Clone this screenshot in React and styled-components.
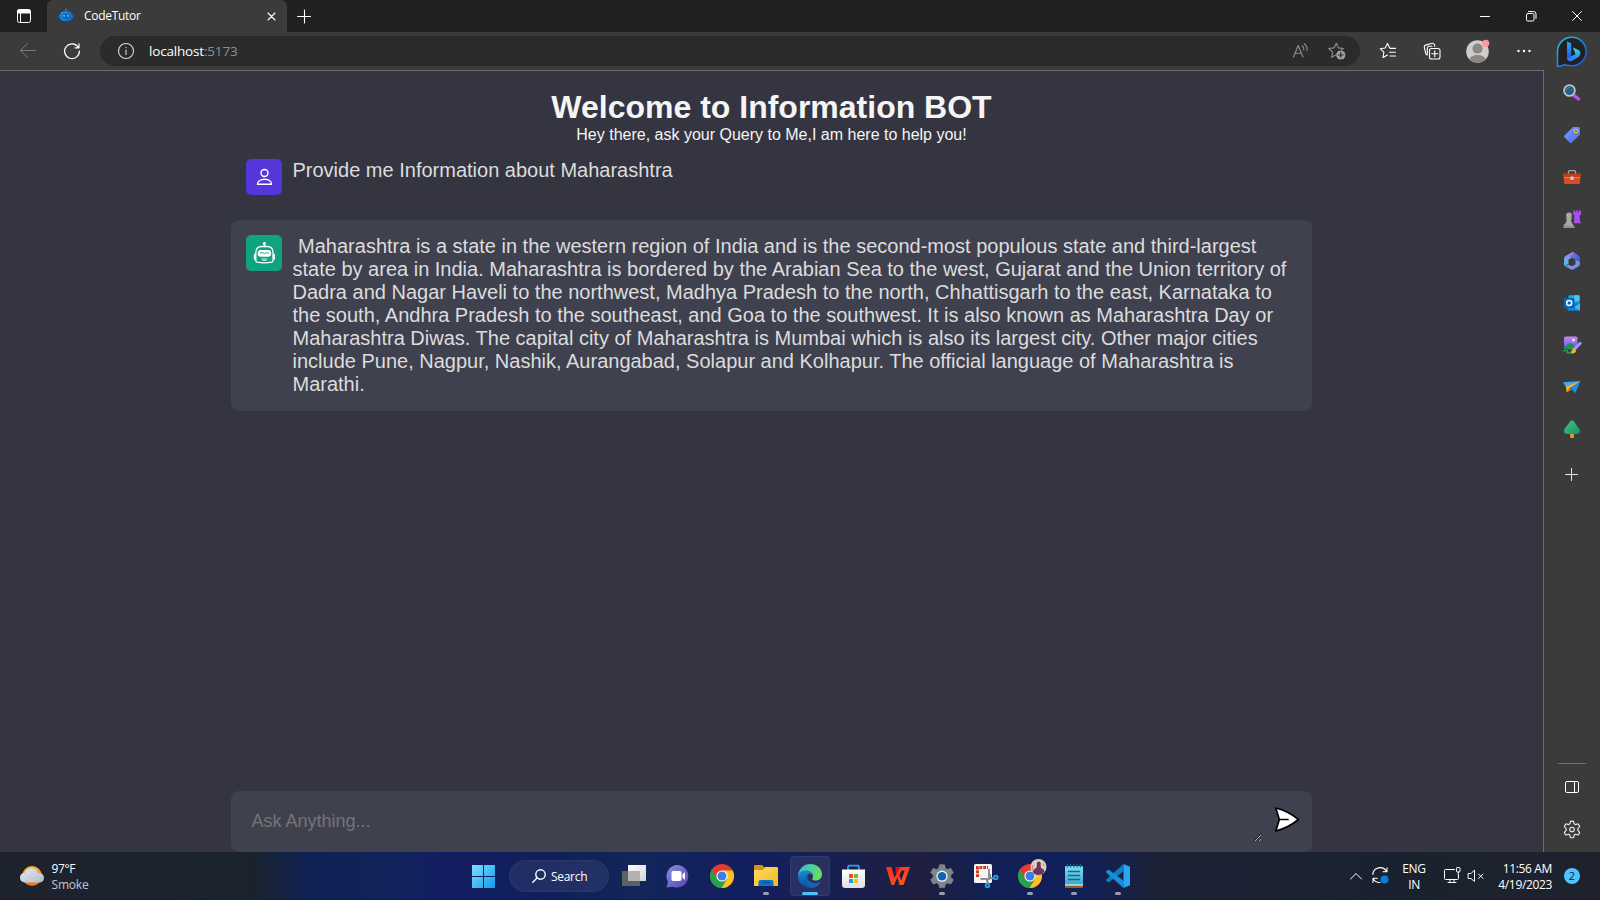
import React from "react";
import styled, { createGlobalStyle, css } from "styled-components";

const GlobalStyle = createGlobalStyle`
  * { box-sizing: border-box; margin: 0; padding: 0; }
  body { margin: 0; width: 1600px; height: 900px; overflow: hidden; background: #202020; }
  button { border: 0; background: none; color: inherit; font: inherit; }
  svg { display: block; flex: none; overflow: visible; }
`;

const uiFont = `"Open Sans", "Noto Sans", sans-serif`;

const Desktop = styled.div`
  display: flex;
  flex-direction: column;
  width: 1600px;
  height: 900px;
  font-family: ${uiFont};
  color: #fff;
`;

/* ---------- tab strip ---------- */
const TabStrip = styled.div`
  display: flex;
  height: 32px;
  background: #202020;
`;
const TabActions = styled.button`
  display: grid;
  place-items: center;
  width: 47px;
  height: 32px;
  border-radius: 0 0 4px 0;
`;
const Tab = styled.div`
  display: flex;
  align-items: center;
  width: 240px;
  padding: 0 10px 0 11px;
  background: #3b3b3b;
  border-radius: 6px 6px 0 0;
`;
const TabTitle = styled.span`
  flex: 1;
  margin-left: 10px;
  font-size: 12px;
  line-height: 16px;
  letter-spacing: -0.3px;
`;
const NewTab = styled.button`
  display: grid;
  place-items: center;
  width: 34px;
`;
const WindowControls = styled.div`
  display: flex;
  margin-left: auto;
`;
const WindowButton = styled.button`
  display: grid;
  place-items: center;
  width: 46px;
  height: 32px;
`;

/* ---------- browser ---------- */
const BrowserBody = styled.div`
  display: flex;
  height: 820px;
`;
const MainColumn = styled.div`
  display: flex;
  flex-direction: column;
  width: 1544px;
`;
const Toolbar = styled.div`
  display: flex;
  align-items: center;
  height: 38px;
  padding-left: 6px;
  background: #3b3b3b;
`;
const ToolButton = styled.button`
  display: grid;
  flex: none;
  place-items: center;
  width: ${(p) => p.$w || 44}px;
  height: 30px;
`;
const AddressBar = styled.div`
  display: flex;
  flex: none;
  align-items: center;
  width: 1260px;
  height: 30px;
  margin: 0 6px;
  padding: 0 5px 0 17px;
  border-radius: 15px;
  background: #2b2b2b;
`;
const Url = styled.span`
  flex: 1;
  margin-left: 14px;
  font-size: 13.5px;
  line-height: 20px;
  letter-spacing: -0.18px;
  color: #fff;
`;
const Port = styled.span`
  color: #8f8f8f;
`;
const Sidebar = styled.aside`
  display: flex;
  flex-direction: column;
  align-items: center;
  width: 56px;
  background: #3b3b3b;
`;
const SideButton = styled.button`
  display: grid;
  place-items: center;
  width: 42px;
  height: ${(p) => p.$h || 42}px;
`;
const SideDivider = styled.div`
  width: 28px;
  height: 1px;
  margin-top: auto;
  margin-bottom: 2px;
  background: #6e6e6e;
`;
const SideFooter = styled.div`
  padding-bottom: 2px;
`;

/* ---------- page ---------- */
const Page = styled.main`
  display: flex;
  flex-direction: column;
  align-items: center;
  flex: 1;
  border-top: 1px solid #6d6d6d;
  border-right: 1px solid #6d6d6d;
  background: #343541;
  font-family: "Liberation Sans", Arial, sans-serif;
`;
const Header = styled.header`
  padding-top: 18px;
  text-align: center;
  color: #f5f5f5;
`;
const Title = styled.h1`
  font-size: 32px;
  line-height: 37px;
  font-weight: 700;
`;
const Subtitle = styled.p`
  font-size: 16px;
  line-height: 18px;
`;
const Chat = styled.section`
  display: flex;
  flex-direction: column;
  flex: 1;
  gap: 10px;
  width: 1081px;
`;
const Message = styled.div`
  display: flex;
  gap: 10.5px;
  padding: 15px;
  border-radius: 8px;
  ${(p) => p.$bot && css`background: #40414f;`}
`;
const Avatar = styled.div`
  flex: none;
  width: 36px;
  height: 36px;
  border-radius: 5px;
  background: ${(p) => (p.$bot ? "#10a37f" : "#5436da")};
`;
const MessageText = styled.p`
  width: 1000px;
  font-size: 20px;
  line-height: 23px;
  color: #dcdcdc;
  white-space: pre-wrap;
`;
const PromptForm = styled.form`
  display: flex;
  width: 1081px;
  height: 61px;
  padding: 10px;
  border-radius: 8px;
  background: #40414f;
`;
const PromptInput = styled.textarea`
  flex: 1;
  height: 41px;
  padding: 10px 10px 10px 10.5px;
  border: 0;
  outline: 0;
  background: transparent;
  color: #fff;
  font-family: inherit;
  font-size: 18px;
  line-height: 21px;
  &::placeholder { color: #757575; }
`;
const SendButton = styled.button`
  display: flex;
  width: 40px;
  height: 41px;
  padding: 5px 0 0 12px;
`;

/* ---------- taskbar ---------- */
const Taskbar = styled.footer`
  display: flex;
  align-items: center;
  height: 48px;
  border-bottom: 1px solid #191a2b;
  background: linear-gradient(90deg,
    #1e232d 0, #1a222e 255px, #15233f 278px, #102254 308px, #12225c 400px, #131e62 450px,
    #101f59 540px, #13255a 640px, #121f5e 740px, #181f52 830px, #1f1f3f 920px,
    #111f55 990px, #10205a 1070px, #182047 1125px, #1c2234 1160px, #1a212e 1400px, #1e222d 1600px);
`;
const Weather = styled.div`
  display: flex;
  align-items: center;
  gap: 7.5px;
  width: 462px;
  padding-left: 20px;
`;
const Stack = styled.div`
  display: flex;
  flex-direction: column;
  width: ${(p) => p.$w}px;
  padding-top: 2px;
  text-align: ${(p) => p.$align || "left"};
  font-size: 12px;
  line-height: 16px;
  letter-spacing: -0.35px;
  white-space: nowrap;
`;
const Muted = styled.span`
  color: #c3c6cb;
  letter-spacing: -0.2px;
`;
const AppSlot = styled.button`
  display: flex;
  flex-direction: column;
  align-items: center;
  width: 40px;
  height: 40px;
  margin: 0 2px;
  padding-top: 8px;
  border-radius: 4px;
  ${(p) => p.$active && css`
    background: rgba(255, 255, 255, 0.08);
    box-shadow: inset 0 0 0 1px rgba(255, 255, 255, 0.05);
  `}
`;
const Running = styled.i`
  width: ${(p) => (p.$active ? 16 : 6)}px;
  height: 3px;
  margin-top: 4px;
  border-radius: 2px;
  background: ${(p) => (p.$active ? "#4cc2ff" : "#9a9eb4")};
`;
const SearchPill = styled.button`
  display: flex;
  align-items: center;
  gap: 5px;
  width: 100px;
  height: 32px;
  margin: 0 3px;
  padding: 1px 0 0 23px;
  border-radius: 16px;
  background: rgba(255, 255, 255, 0.07);
  box-shadow: inset 0 0 0 1px rgba(255, 255, 255, 0.03);
  font-size: 12px;
  font-weight: 500;
  letter-spacing: -0.3px;
`;
const Tray = styled.div`
  display: flex;
  align-items: center;
  margin-left: auto;
  padding-right: 20px;
`;
const TrayIcon = styled.div`
  margin-left: ${(p) => p.$gap}px;
`;
const Badge = styled.div`
  display: grid;
  place-items: center;
  width: 16px;
  height: 16px;
  margin-left: 12px;
  border-radius: 50%;
  background: #4cc2ff;
  color: #14202c;
  font-size: 11px;
  line-height: 16px;
`;

/* ---------- icons ---------- */
const Line = ({ w = 16, h = w, color = "#fff", sw = 1, children }) => (
  <svg width={w} height={h} viewBox={`0 0 ${w} ${h}`} fill="none" stroke={color} strokeWidth={sw} strokeLinecap="round" strokeLinejoin="round">{children}</svg>
);
const Art = ({ w = 24, h = w, children }) => (
  <svg width={w} height={h} viewBox={`0 0 ${w} ${h}`}>{children}</svg>
);
const Grad = ({ id, a, b, x2 = 1, y2 = 1 }) => (
  <linearGradient id={id} x1="0" y1="0" x2={x2} y2={y2}>
    <stop offset="0" stopColor={a} />
    <stop offset="1" stopColor={b} />
  </linearGradient>
);

const Favicon = () => (
  <Art w={16}>
    <Grad id="fav" a="#1b9de8" b="#0866d0" y2={1} />
    <path d="M7.500 1h1v3h-1z" fill="#2c7db0" /><circle cx="8" cy="1.500" r="1" fill="#2c7db0" />
    <rect x="0.300" y="6.500" width="15.400" height="4" rx="1.600" fill="#1266bd" />
    <rect x="2.200" y="3.400" width="11.600" height="9.600" rx="3.800" fill="url(#fav)" />
    <rect x="4" y="5.400" width="8" height="4.800" rx="2.200" fill="#0756ad" />
    <circle cx="6" cy="7.800" r="1.200" fill="#35bdf5" /><circle cx="10" cy="7.800" r="1.200" fill="#35bdf5" />
  </Art>
);

const ReadAloud = () => (
  <Line w={18} color="#8f8f8f" sw={1.1}>
    <path d="M1.500 15 6.200 3.500 11 15M3.200 11.200h6M10.300 4c1.200 1 1.700 2.400 1.500 4M12.200 1.700c2.200 1.700 3.200 4 2.800 7" />
  </Line>
);
const StarPlus = () => (
  <Line w={18} color="#8f8f8f" sw={1.1}>
    <path d="M13.500 7.500 15.500 6.500 10.500 5.900 8.300 1.200 6 5.900.8 6.500l3.800 3.600-1 5.200 4-2.200" />
    <circle cx="12.800" cy="13" r="4.600" fill="#a0a0a0" stroke="none" />
    <path d="M10.500 13h4.600M12.800 10.700v4.600" stroke="#2b2b2b" strokeWidth="1.200" />
  </Line>
);
const Favorites = () => (
  <Line w={18} sw={1.1}>
    <path d="M10.500 5.500 8.500 1.500 6.200 6l-5 .7L4.900 10.200 4 15.500l4.500-2.500M11 6.400h5.500M10.500 10.200h6M11 14h5.500" />
  </Line>
);
const Collections = () => (
  <Line w={18} sw={1.1}>
    <rect x="6.500" y="6.500" width="10.500" height="10.500" rx="2" />
    <path d="M11.750 8.800v6M8.750 11.750h6M4.200 13c-1-.4-1.300-.9-1.500-1.700L1.300 5.300c-.2-1 .3-1.900 1.300-2.200l6.600-1.800c1-.2 1.900.3 2.200 1.300l.5 1.700M5.600 4.300q-1.300.5-1.300 2V12M5.600 4.300H9" />
  </Line>
);
const Profile = () => (
  <Art w={24}>
    <clipPath id="pf"><circle cx="11.500" cy="12.500" r="11.300" /></clipPath>
    <g clipPath="url(#pf)">
      <rect width="24" height="24" fill="#cfcdcb" />
      <circle cx="11.500" cy="9.600" r="5" fill="#8a8785" />
      <ellipse cx="11.500" cy="21" rx="8.200" ry="5" fill="#8a8785" />
    </g>
    <circle cx="19.700" cy="4.300" r="3.600" fill="#f99b98" />
  </Art>
);
const Bing = () => (
  <Art w={32}>
    <Grad id="bb" a="#20c4e4" b="#1f4de0" />
    <Grad id="b1" a="#2aa9f5" b="#1b55e8" x2={0} />
    <Grad id="b2" a="#3bdbe8" b="#2f6bf0" x2={0} />
    <path d="M1.500 30.500V15.500A14.300 14.300 0 1 1 15.800 29.800c-3 0-5-.4-7-1.200C6 29.700 4 30.500 1.500 30.500z" fill="#202124" stroke="url(#bb)" strokeWidth="1.500" />
    <path d="M11 5.500l4.200 1.800v13.500L11 23.500z" fill="url(#b1)" />
    <path d="M17 11.500l6 2.800c2.300 2.400 1.500 5.300-.5 6.600l-6.500 4c-2.500 1-5 .1-5-2.300l8.500-4.400z" fill="url(#b2)" />
  </Art>
);

const sideIcons = {
  search: (
    <Art w={18}>
      <path d="M11 11.500l4.600 3.600" stroke="#c050ee" strokeWidth="3.200" strokeLinecap="round" />
      <circle cx="6.500" cy="6.500" r="5.400" fill="#25607f" stroke="#c0c2c4" strokeWidth="1.800" />
      <path d="M3.500 6.500a3.300 3.300 0 0 1 4-3" stroke="#3e8dad" fill="none" />
    </Art>
  ),
  tag: (
    <Art w={18}>
      <Grad id="tg" a="#79a0ff" b="#4a69e8" />
      <path d="M10 1h5.500q1.500 0 1.500 1.500v6L9 16.500q-1.200 1-2.400 0L1.600 11.600q-1-1.200 0-2.400z" fill="url(#tg)" />
      <circle cx="13" cy="5" r="1.600" fill="#3d4b8e" stroke="#f4c72c" strokeWidth="1.300" />
    </Art>
  ),
  tools: (
    <Art w={18}>
      <path d="M5.500 6V3.600q0-1 1-1h5q1 0 1 1V6" fill="none" stroke="#a3a5a5" strokeWidth="1.300" />
      <rect x="1" y="9" width="16" height="7" rx="1" fill="#dd4b23" />
      <rect x="0.200" y="5.400" width="17.600" height="5" rx="1" fill="#c43c1c" />
      <path d="M.8 9h16.400v1.200H.8z" fill="#f4764c" />
      <circle cx="9" cy="10.200" r="1.900" fill="#cbcaca" />
    </Art>
  ),
  games: (
    <Art w={18}>
      <path d="M10.200.5h2v1.700h1V.5h2v1.700h1V.5H18v4l-1.400 1 .4 5.500 1 2.300h-7l.4-8-1.200-1z" fill="#a950ea" />
      <circle cx="6" cy="5.500" r="2.900" fill="#aaa" />
      <path d="M2.500 8h7L8 9.700q.2 3.200 2.300 5V18H.8v-3.300q2.600-1.500 3-5z" fill="#a7a7a7" />
      <path d="M.5 15.700h11V18H.5z" fill="#919191" />
    </Art>
  ),
  m365: (
    <Art w={18}>
      <Grad id="m1" a="#a583ee" b="#48c3f0" x2={0} />
      <Grad id="m2" a="#8e7bea" b="#2c50cf" />
      <path d="M9 .3 2.600 4Q1 5 1 7v5q0 1.500 1 2.200l3.500-2.500V7.500L11.500 4V.8Q10-.3 9 .3z" fill="url(#m1)" />
      <path d="M11 .7l4.500 2.700Q17 4.500 17 6.500V12l-4.500-2.200V7.700L7.500 5 6 4.500z" fill="url(#m2)" />
      <path d="M17 10v1.500q0 2-1.600 3l-4.800 2.800q-1.600.8-3.200 0l-5.600-3.300q2 .3 3.700-1.500L9 14.300l3.500-2V8z" fill="#7593ee" />
    </Art>
  ),
  outlook: (
    <Art w={18}>
      <rect x="5.500" y="1.300" width="11" height="12" rx="1" fill="#1fa3e8" />
      <path d="M11 1.300h4.500q1 0 1 1V7H11z" fill="#4cc4f5" />
      <path d="M4.500 10 17 8.500V15.500q0 1.200-1.200 1.200H5.700q-1.200 0-1.200-1.200z" fill="#1183d1" />
      <path d="M17 9 11 13.500l5.500 3q.5-.5.500-1z" fill="#42b8f0" />
      <rect x="1" y="4" width="10.500" height="10" rx="1" fill="#0865bd" />
      <circle cx="6.200" cy="9" r="2.500" fill="none" stroke="#fff" strokeWidth="1.500" />
    </Art>
  ),
  image: (
    <Art w={18}>
      <Grad id="im" a="#bc8bf5" b="#7350d4" x2={0} />
      <rect x="1" y=".5" width="13.500" height="13" rx="1.700" fill="url(#im)" />
      <path d="M1 11 6 7.500q1.500-1 3 0L12 10l-3 3.500H1z" fill="#208e56" />
      <circle cx="10.500" cy="4" r="1.500" fill="#f1ddff" />
      <path d="M0 13.500h9V18H0z" fill="#3b3b3b" />
      <path d="M.5 15.500q2-2 4-.5-1 2 1 2t2.500-1.500" stroke="#26a269" strokeWidth="1.400" fill="none" />
      <path d="M17.300 7.300 12 12.500" stroke="#a497f5" strokeWidth="2.800" strokeLinecap="round" />
      <path d="M10 12q2.800.3 3.200 3Q11.500 18.500 7.700 17.300q1-2.800 2.300-5.300z" fill="#f7ae28" />
    </Art>
  ),
  drop: (
    <Art w={18}>
      <path d="M0 4.300 17.500 3 8 9.500 3.500 10z" fill="#42a8ef" />
      <path d="M17.500 3 12.200 15.500 7.500 9.800z" fill="#248be4" />
      <path d="M17 3.500 3 8.400 3.500 14.500l2.900-4.200z" fill="#f9b529" />
      <path d="M3.500 14.500 6.400 10l2 1.700z" fill="#dc8b0b" />
    </Art>
  ),
  tree: (
    <Art w={18}>
      <Grad id="tr" a="#3fc584" b="#159263" />
      <rect x="7.200" y="13" width="3.700" height="5" rx=".7" fill="#e99b1c" />
      <path d="M7.300 1.200Q9-.5 10.700 1.200L16.500 9q1.700 4.500-2.500 5H4q-4.200-.5-2.500-5z" fill="url(#tr)" />
    </Art>
  ),
};

const UserGlyph = () => (
  <Line w={36} sw={1.400}>
    <circle cx="18.500" cy="14" r="3.500" />
    <path d="M11.500 25.300c-.4-2.900 3-5 7-5s7.400 2.100 7 5z" />
  </Line>
);
const BotGlyph = () => (
  <Line w={36} sw={1.300}>
    <path d="M18.400 8v3.500" />
    <circle cx="18.400" cy="8.600" r="1.500" fill="#fff" stroke="none" />
    <path d="M11 27.200q-1.200-.4-1.200-2V17.500c0-4 2.700-6 6-6h5.200c3.300 0 6 2 6 6v7.700q0 1.600-1.200 2c-4 .7-10.800.7-14.800 0z" />
    <path d="M8.700 19.500v4.500M28.100 19.500v4.500" strokeWidth="1.700" />
    <rect x="11.700" y="15" width="13.400" height="6.700" rx="3" fill="#fff" stroke="none" />
    <path d="M14.300 18.200l1.700-.8 2.400 1.400 2.300-1.400 1.800.9" stroke="#10a37f" strokeWidth=".9" />
    <path d="M15.800 24h5.200M16.800 25.300h3.200" strokeWidth=".8" />
  </Line>
);

const Chrome = ({ badge }) => (
  <Art>
    <clipPath id="cr"><circle cx="12" cy="12" r="12" /></clipPath>
    <g clipPath="url(#cr)">
      <rect width="24" height="24" fill="#e33b2e" />
      <path d="M12 6.500H24V24H11l6-9z" fill="#fcc31e" />
      <path d="M0 3.500h.8L7.200 15 12 17.500l4.800-2.500L11.500 24H0z" fill="#25a149" />
    </g>
    <circle cx="12" cy="12" r="5.600" fill="#fff" />
    <circle cx="12" cy="12" r="4.500" fill="#3b7de9" />
    {badge && (
      <g>
        <circle cx="20.500" cy="3" r="8" fill="#dccdbf" />
        <path d="M14.500 8q2-4 4-4l.5-4q2-2.500 3.500 0L23 4q3 .8 3.500 3.500-2.300 3.500-6 3.500-4 0-6-3z" fill="#6e3459" />
        <circle cx="20.800" cy="-.8" r="1.800" fill="#613b42" />
        <path d="M15 1q-1.500 3 0 5M25 0l1.500 2" stroke="#b9827b" fill="none" />
      </g>
    )}
  </Art>
);

const StartIcon = () => (
  <Art>
    <Grad id="win" a="#7be0fb" b="#1499f0" />
    <path d="M0 1h11v11H0zM12 1h11v11H12zM0 13h11v11H0zM12 13h11v11H12z" fill="url(#win)" />
  </Art>
);

const apps = [
  { id: "taskview", icon: (
    <Art>
      <Grad id="tv" a="#fff" b="#d4d4d6" />
      <rect x="6" y="1" width="18" height="16" fill="url(#tv)" />
      <rect x="0" y="7" width="18" height="15" fill="#5f6063" />
      <rect x="6" y="7" width="12" height="10" fill="#b2b2b4" />
    </Art>
  ) },
  { id: "chat", icon: (
    <Art>
      <Grad id="ch" a="#8f8fe0" b="#5147b4" />
      <path d="M12 1a11.300 11.300 0 1 1-5.300 21.700L.5 23.500 2 17.900A11.300 11.300 0 0 1 12 1z" fill="url(#ch)" />
      <rect x="5.500" y="7" width="10" height="10" rx="1.700" fill="#fff" />
      <path d="M16.500 10.500 19 8v8l-2.500-2.500z" fill="#fff" />
    </Art>
  ) },
  { id: "chrome", icon: <Chrome /> },
  { id: "files", run: true, icon: (
    <Art>
      <Grad id="fo" a="#ffdb68" b="#f5b81c" />
      <path d="M0 2q0-1 1-1h7l3 3v5H0z" fill="#d6940b" />
      <path d="M0 6h9l2-3h12q1 0 1 1v18H0z" fill="url(#fo)" />
      <path d="M4.500 22v-4q0-2 2-2h11q2 0 2 2v4z" fill="#0c75c9" />
      <path d="M8 18.500h8" stroke="#09539b" strokeWidth="1.400" />
    </Art>
  ) },
  { id: "edge", run: true, active: true, icon: (
    <Art>
      <Grad id="e1" a="#2cb9e9" b="#65df60" y2={0.3} />
      <Grad id="e2" a="#148bd8" b="#0c4c9a" x2={0} />
      <path d="M0 12C.5 4.500 6 0 12.200 0 19 0 24 4.800 24 10.200c0 4-3 6.300-6.400 6.300-2 0-3.400-.6-3.400-1.500 0-.7.900-1.200.9-2.600C15 8.900 11.300 6.800 8 6.800 4.500 6.800 1.500 8.700 0 12z" fill="url(#e1)" />
      <path d="M0 12c1.500-3.200 4.500-5.200 8-5.200 3.600 0 6.900 2.300 7 5.200-1-2-3-2.600-4.600-1.800-4.200 2-3.400 12.300 4.600 13.400C7 25.500 0 20 0 12z" fill="url(#e2)" />
      <path d="M10.400 10.200C5.500 12 5.800 21.500 13.500 24c4.400-.3 7-2.500 8.800-5.300.3-.6-.1-1-.7-.7-5 2.300-12.200.4-12.200-5.200 0-1 .3-1.800 1-2.600z" fill="#1463b4" />
    </Art>
  ) },
  { id: "store", icon: (
    <Art>
      <Grad id="st" a="#fff" b="#dedee0" x2={0} />
      <path d="M6 6V3q0-1.300 1.300-1.300h8.400Q17 1.700 17 3v3" fill="none" stroke="#27a4e6" strokeWidth="1.700" />
      <path d="M0 5.500h23V21q0 3-3 3H3q-3 0-3-3z" fill="url(#st)" />
      <path d="M7 10h4v4H7z" fill="#f1511b" /><path d="M12 10h4v4h-4z" fill="#80b928" />
      <path d="M7 15h4v4H7z" fill="#1b9de2" /><path d="M12 15h4v4h-4z" fill="#fbb813" />
    </Art>
  ) },
  { id: "wps", icon: (
    <Art>
      <Grad id="wp" a="#ff2c22" b="#ff5a22" />
      <path d="M0 3h5.500l3 11L13 5l1.500-2H24l-6.500 18h-4l-2-8-3.500 8H5.500zM15.500 6.500l-2.300 5 2 5 3.500-10z" fill="url(#wp)" fillRule="evenodd" />
      <path d="M9.500 3H14l-4 9z" fill="#d71518" />
    </Art>
  ) },
  { id: "settings", run: true, icon: (
    <Art>
      <path d="M9.500.8h5l.7 3.400 2.300 1.300 3.300-1.100 2.500 4.300L20.700 11v2.400l2.600 2.300-2.500 4.300-3.300-1.100-2.300 1.300-.7 3.400h-5l-.7-3.400-2.300-1.300L3.200 20 .7 15.700l2.600-2.300V11L.7 8.700l2.500-4.300 3.300 1.100 2.300-1.300z" fill="#7d858d" stroke="#7d858d" strokeWidth=".8" strokeLinejoin="round" />
      <circle cx="12" cy="12.200" r="5.600" fill="#f0f2f4" />
      <circle cx="12" cy="12.200" r="4.300" fill="#1264af" />
    </Art>
  ) },
  { id: "snip", icon: (
    <Art>
      <rect x="0" y="0" width="18" height="19" rx="1.500" fill="#f5f5f6" />
      <path d="M3.500 13V3.500H14" stroke="#c83b16" strokeWidth="3" strokeDasharray="2.800 1" fill="none" />
      <path d="M6.500 15h8.500V5" stroke="#929395" strokeWidth="2" fill="none" />
      <path d="M16 10v4l5 .5M13 15.500l1 4.500" stroke="#7c858e" strokeWidth="2" fill="none" />
      <circle cx="21.800" cy="13.500" r="1.900" fill="#0f376f" stroke="#28a3ec" strokeWidth="1.600" />
      <circle cx="13.500" cy="21.500" r="1.900" fill="#0f376f" stroke="#28a3ec" strokeWidth="1.600" />
    </Art>
  ) },
  { id: "chrome2", run: true, icon: <Chrome badge /> },
  { id: "notepad", run: true, icon: (
    <Art>
      <Grad id="np" a="#7bdff0" b="#34a6cb" x2={0} />
      <rect x="3" y="2" width="18" height="20" rx="1" fill="url(#np)" />
      <path d="M3 21.500h18V23q0 1-1 1H4q-1 0-1-1z" fill="#a7581f" />
      <path d="M3 21h18" stroke="#fff" strokeWidth="1" />
      <path d="M5.500 0v3.500M8.700 0v3.500M12 0v3.500M15.300 0v3.500M18.500 0v3.500" stroke="#176884" strokeWidth="1.300" />
      <path d="M6 7.500h12M6 11.500h12M6 15.500h12" stroke="#176a87" strokeWidth="1.500" />
    </Art>
  ) },
  { id: "vscode", run: true, icon: (
    <Art>
      <path d="M17.500 0 24 2.700v18.600L17.500 24z" fill="#2aa5f2" />
      <path d="M17.500 0 18 7 2.500 18.500.2 16.700q-.4-.6 0-1.200z" fill="#0f7ec8" />
      <path d="M17.500 24 18 17 2.500 5.500.2 7.300q-.4.600 0 1.200z" fill="#1790dd" />
    </Art>
  ) },
];

const gearPath = "M6.600 1.200q1.400-.4 2.800 0l.5 2.200 1.200.7 2.200-.7q1 1 1.500 2.500l-1.600 1.700v1.600l1.600 1.700q-.5 1.500-1.500 2.500l-2.200-.7-1.200.7-.5 2.200q-1.400.4-2.800 0l-.5-2.200-1.200-.7-2.200.7q-1-1-1.500-2.500l1.600-1.700V7.600L1.200 5.900q.5-1.500 1.500-2.500l2.200.7 1.200-.7z";

const answer =
  " Maharashtra is a state in the western region of India and is the second-most populous state and third-largest state by area in India. Maharashtra is bordered by the Arabian Sea to the west, Gujarat and the Union territory of Dadra and Nagar Haveli to the northwest, Madhya Pradesh to the north, Chhattisgarh to the east, Karnataka to the south, Andhra Pradesh to the southeast, and Goa to the southwest. It is also known as Maharashtra Day or Maharashtra Diwas. The capital city of Maharashtra is Mumbai which is also its largest city. Other major cities include Pune, Nagpur, Nashik, Aurangabad, Solapur and Kolhapur. The official language of Maharashtra is Marathi.";

export default function App() {
  return (
    <Desktop>
      <GlobalStyle />
      <TabStrip>
        <TabActions>
          <Line w={14}>
            <rect x=".5" y=".5" width="13" height="13" rx="2" />
            <path d="M1 1h12v3H1z" fill="#fff" /><path d="M3.500 4v9" />
          </Line>
        </TabActions>
        <Tab>
          <Favicon />
          <TabTitle>CodeTutor</TabTitle>
          <Line w={10} sw={1.100}><path d="M1 2l7 7M8 2 1 9" /></Line>
        </Tab>
        <NewTab><Line w={14} sw={1.100}><path d="M.5 7.500h13M7.500 1v13" /></Line></NewTab>
        <WindowControls>
          <WindowButton><Line w={10}><path d="M.5 5.500h9" /></Line></WindowButton>
          <WindowButton>
            <Line w={10}>
              <rect x=".5" y="2.500" width="7.500" height="7.500" rx="1.200" />
              <path d="M2.500.5H7.500Q10 .5 10 3v4.500" />
            </Line>
          </WindowButton>
          <WindowButton><Line w={10}><path d="M.5.5l9 9M9.500.5l-9 9" /></Line></WindowButton>
        </WindowControls>
      </TabStrip>

      <BrowserBody>
        <MainColumn>
          <Toolbar>
            <ToolButton><Line color="#7b7b7b"><path d="M15.500 7.500H.5M7.500.5l-7 7 7 7" /></Line></ToolButton>
            <ToolButton>
              <Line sw={1.200}><path d="M14.300 4.300A7.400 7.400 0 1 0 15.400 8M15 .8v4h-4" /></Line>
            </ToolButton>
            <AddressBar>
              <Line w={18} color="#dadada" sw={1.100}>
                <circle cx="9" cy="9" r="7.500" /><path d="M9 8v4.500M9 5.300v.3" />
              </Line>
              <Url>localhost<Port>:5173</Port></Url>
              <ToolButton $w={36}><ReadAloud /></ToolButton>
              <ToolButton $w={36}><StarPlus /></ToolButton>
            </AddressBar>
            <ToolButton><Favorites /></ToolButton>
            <ToolButton><Collections /></ToolButton>
            <ToolButton $w={48}><Profile /></ToolButton>
            <ToolButton $w={42}>
              <Art w={14}><circle cx="2.500" cy="7" r="1.200" fill="#fff" /><circle cx="8" cy="7" r="1.200" fill="#fff" /><circle cx="13.500" cy="7" r="1.200" fill="#fff" /></Art>
            </ToolButton>
          </Toolbar>
          <Page>
            <Header>
              <Title>Welcome to Information BOT</Title>
              <Subtitle>Hey there, ask your Query to Me,I am here to help you!</Subtitle>
            </Header>
            <Chat>
              <Message>
                <Avatar><UserGlyph /></Avatar>
                <MessageText>Provide me Information about Maharashtra</MessageText>
              </Message>
              <Message $bot>
                <Avatar $bot><BotGlyph /></Avatar>
                <MessageText>{answer}</MessageText>
              </Message>
            </Chat>
            <PromptForm>
              <PromptInput rows={1} placeholder="Ask Anything..." />
              <SendButton type="button">
                <Line w={26} color="#000" sw={1.700}>
                  <path d="M1.800 2Q14 5 24.500 13.500 14 22 1.800 25L5.300 13.500z" fill="#fff" />
                  <path d="M5.300 13.500H14" />
                </Line>
              </SendButton>
            </PromptForm>
          </Page>
        </MainColumn>
        <Sidebar>
          <SideButton $h={40}><Bing /></SideButton>
          {Object.entries(sideIcons).map(([name, icon]) => (
            <SideButton key={name}>{icon}</SideButton>
          ))}
          <SideButton $h={47}><Line w={12} color="#e8e8e8"><path d="M-.5 6.500h12M5.500.5v12" /></Line></SideButton>
          <SideDivider />
          <SideFooter>
            <SideButton>
              <Line w={14} h={12}><rect x=".5" y=".5" width="13" height="11" rx="1.500" /><path d="M9.500.5v11" /></Line>
            </SideButton>
            <SideButton>
              <svg width="18" height="18" viewBox="0 0 16 16" fill="none" stroke="#eee" strokeWidth="1" strokeLinejoin="round">
                <path d={gearPath} /><circle cx="8" cy="8.400" r="2" />
              </svg>
            </SideButton>
          </SideFooter>
        </Sidebar>
      </BrowserBody>

      <Taskbar>
        <Weather>
          <Art w={24}>
            <Grad id="su" a="#fbb32b" b="#f26d12" x2={0} />
            <Grad id="cl" a="#e5ebf4" b="#afbbcb" />
            <circle cx="12" cy="12" r="10" fill="url(#su)" />
            <path d="M5 18.500q-5-.5-5-5Q.2 9.200 4.500 9 6 4 11.500 4q5 .2 6.700 5 5.500-.2 5.800 4.700-.2 4.600-5 4.800z" fill="url(#cl)" />
          </Art>
          <Stack><span>97°F</span><Muted>Smoke</Muted></Stack>
        </Weather>
        <AppSlot><StartIcon /></AppSlot>
        <SearchPill>
          <Line w={14} sw={1.400}><circle cx="8.500" cy="5.500" r="4.700" /><path d="M5 9 .8 13.200" /></Line>
          Search
        </SearchPill>
        {apps.map((a) => (
          <AppSlot key={a.id} $active={a.active}>
            {a.icon}
            {a.run && <Running $active={a.active} />}
          </AppSlot>
        ))}
        <Tray>
          <Line w={12}><path d="M.5 9 6 3.500 11.500 9" /></Line>
          <TrayIcon $gap={10}>
            <Line w={17} sw={1.100}>
              <path d="M.8 7.500A7.300 7.300 0 0 1 14.500 4.500M15 .8v4h-4M1 15.500v-4.300h4.300M1.500 12q2 3.800 6.500 3.500" />
              <circle cx="12.500" cy="12.500" r="4" fill="#0a7cdc" stroke="none" />
            </Line>
          </TrayIcon>
          <TrayIcon $gap={10}><Stack $w={30} $align="center"><span>ENG</span><span>IN</span></Stack></TrayIcon>
          <TrayIcon $gap={15}>
            <Line w={17}>
              <path d="M10.500 2.500H1.500q-1 0-1 1v8q0 1 1 1h12q1 0 1-1V8.500M4 15.500h8M6 12.500v3M10 12.500v3" />
              <rect x="12.500" y=".5" width="3.500" height="4.500" rx=".8" /><path d="M14.300 5v3.500" />
            </Line>
          </TrayIcon>
          <TrayIcon $gap={7}>
            <Line w={16}><path d="M.5 5.500h2.500l3.500-3.500v11.500L3 10.500H.5zM10.500 6l4.500 4.500M15 6l-4.500 4.500" /></Line>
          </TrayIcon>
          <TrayIcon $gap={12}><Stack $w={56} $align="right"><span>11:56 AM</span><span>4/19/2023</span></Stack></TrayIcon>
          <Badge>2</Badge>
        </Tray>
      </Taskbar>
    </Desktop>
  );
}
